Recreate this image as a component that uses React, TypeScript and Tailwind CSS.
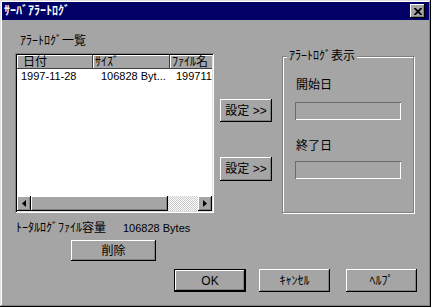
import React from "react";

const raised =
  "bg-[#a5a5a5] shadow-[inset_-1px_-1px_#000,inset_1px_1px_#fff,inset_-2px_-2px_#808080]";

function Arrow({ dir }: { dir: "left" | "right" }) {
  return (
    <div className={`${raised} w-[14px] h-full flex items-center justify-center`}>
      <svg width="4" height="7" viewBox="0 0 4 7">
        {dir === "left" ? (
          <path d="M4 0 L0 3.5 L4 7 Z" fill="#000" />
        ) : (
          <path d="M0 0 L4 3.5 L0 7 Z" fill="#000" />
        )}
      </svg>
    </div>
  );
}

function Btn({
  children,
  className = "",
}: {
  children: React.ReactNode;
  className?: string;
}) {
  return (
    <div
      className={`${raised} flex items-center justify-center text-[12px] leading-none ${className}`}
    >
      {children}
    </div>
  );
}

export default function App() {
  return (
    <div className="w-[431px] h-[307px] bg-[#a5a5a5] p-[2px] flex flex-col text-black text-[12px] font-['Liberation_Sans','Noto_Sans_CJK_JP',sans-serif] shadow-[inset_-1px_-1px_#000,inset_1px_1px_#dfdfdf,inset_-2px_-2px_#808080,inset_2px_2px_#fff]">
      {/* title bar */}
      <div className="h-[18px] bg-[#000066] flex items-center justify-between pl-[2px] pr-[4px]">
        <span className="text-white font-bold text-[12px] leading-none">
          ｻｰﾊﾞｱﾗｰﾄﾛｸﾞ
        </span>
        <div className={`${raised} w-[15px] h-[14px] flex items-center justify-center`}>
          <svg width="8" height="7" viewBox="0 0 8 7">
            <path d="M0.5 0 L7.5 7 M7.5 0 L0.5 7" stroke="#000" strokeWidth="1.8" />
          </svg>
        </div>
      </div>

      <div className="flex-1 flex flex-col pl-[13px] pr-[12px]">
        <div className="flex items-start">
          {/* left column */}
          <div className="w-[200px] mt-[14px] flex flex-col">
            <div className="h-[14px] leading-[14px] pl-[5px]">ｱﾗｰﾄﾛｸﾞ一覧</div>
            <div className="mt-[5px] w-[199px] h-[160px] bg-white p-[2px] flex flex-col overflow-hidden shadow-[inset_1px_1px_#808080,inset_-1px_-1px_#fff,inset_2px_2px_#000,inset_-2px_-2px_#dfdfdf]">
              <div className="h-[14px] flex shrink-0 overflow-hidden">
                <div className="w-[76px] shrink-0 bg-[#a5a5a5] pl-[6px] leading-[14px] shadow-[inset_-1px_-1px_#404040,inset_1px_1px_#fff]">
                  日付
                </div>
                <div className="w-[77px] shrink-0 bg-[#a5a5a5] pl-[2px] leading-[14px] shadow-[inset_-1px_-1px_#404040,inset_1px_1px_#fff]">
                  ｻｲｽﾞ
                </div>
                <div className="w-[70px] shrink-0 bg-[#a5a5a5] pl-[2px] leading-[14px] shadow-[inset_-1px_-1px_#404040,inset_1px_1px_#fff]">
                  ﾌｧｲﾙ名
                </div>
              </div>
              <div className="flex-1 overflow-hidden">
                <div className="h-[14px] flex leading-[14px] text-[11px] whitespace-nowrap">
                  <div className="w-[76px] shrink-0 pl-[4px]">1997-11-28</div>
                  <div className="w-[77px] shrink-0 pl-[8px]">106828 Byt...</div>
                  <div className="w-[70px] shrink-0 pl-[6px]">199711</div>
                </div>
              </div>
              <div className="h-[15px] flex shrink-0">
                <Arrow dir="left" />
                <div className={`${raised} w-[137px]`} />
                <div className="flex-1 bg-[repeating-conic-gradient(#ffffff_0_25%,#c8c8c8_0_50%)] bg-[length:2px_2px]" />
                <Arrow dir="right" />
              </div>
            </div>
            <div className="mt-[8px] h-[14px] leading-[14px] flex pl-[1px]">
              <span className="w-[107px]">ﾄｰﾀﾙﾛｸﾞﾌｧｲﾙ容量</span>
              <span className="text-[11px]">106828 Bytes</span>
            </div>
            <Btn className="mt-[5px] ml-[56px] w-[85px] h-[21px]">削除</Btn>
          </div>

          {/* middle buttons */}
          <div className="ml-[5px] w-[52px] flex flex-col">
            <Btn className="mt-[79px] h-[23px]">設定 &gt;&gt;</Btn>
            <Btn className="mt-[35px] h-[24px]">設定 &gt;&gt;</Btn>
          </div>

          {/* group box */}
          <fieldset className="ml-[10px] mt-[29px] w-[132px] h-[164px] border border-[#808080] shadow-[inset_1px_1px_#fff,1px_1px_#fff]">
            <legend className="ml-[4px] px-[2px] bg-[#a5a5a5] leading-[14px] text-[12px]">
              ｱﾗｰﾄﾛｸﾞ表示
            </legend>
            <div className="pl-[12px] flex flex-col">
              <div className="mt-[15px] pl-[1px] h-[14px] leading-[14px]">開始日</div>
              <div className="mt-[10px] w-[106px] h-[18px] shadow-[inset_1px_1px_#6b6b6b,inset_-1px_-1px_#fff]" />
              <div className="mt-[19px] pl-[1px] h-[14px] leading-[14px]">終了日</div>
              <div className="mt-[8px] w-[106px] h-[18px] shadow-[inset_1px_1px_#6b6b6b,inset_-1px_-1px_#fff]" />
            </div>
          </fieldset>
        </div>

        {/* bottom buttons */}
        <div className="mt-[8px] flex justify-end">
          <div className="w-[72px] h-[23px] border border-black">
            <Btn className="w-full h-full text-[11px]">OK</Btn>
          </div>
          <Btn className="ml-[13px] w-[71px] h-[23px]">ｷｬﾝｾﾙ</Btn>
          <Btn className="ml-[16px] w-[71px] h-[23px]">ﾍﾙﾌﾟ</Btn>
        </div>
      </div>
    </div>
  );
}
